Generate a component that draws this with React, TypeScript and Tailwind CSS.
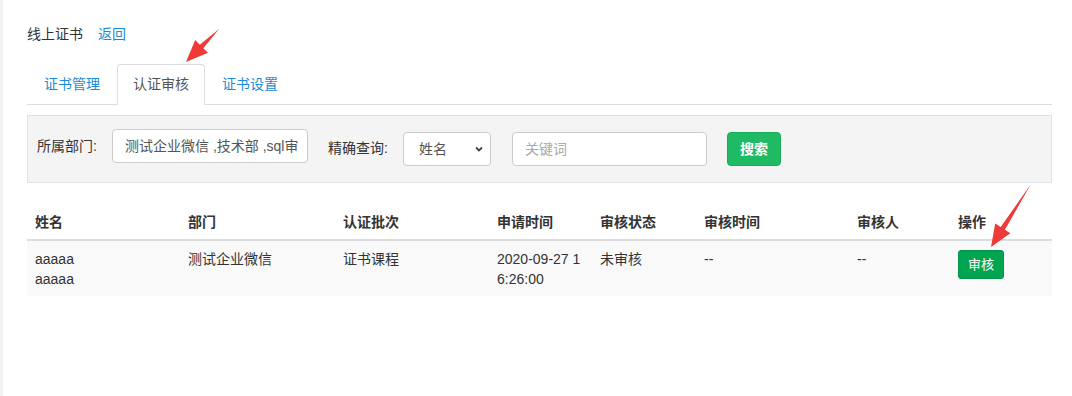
import React from "react";

const font = { fontFamily: '"Liberation Sans", "Noto Sans CJK SC", sans-serif' };

function Arrow({ x1, y1, x2, y2 }: { x1: number; y1: number; x2: number; y2: number }) {
  const dx = x2 - x1;
  const dy = y2 - y1;
  const len = Math.sqrt(dx * dx + dy * dy);
  const ux = dx / len;
  const uy = dy / len;
  const px = -uy;
  const py = ux;
  const head = 22;
  const hw = 9;
  const sw = 2.5;
  const bx = x2 - ux * head;
  const by = y2 - uy * head;
  const pts = [
    [x1, y1],
    [bx + px * sw, by + py * sw],
    [bx + px * hw, by + py * hw],
    [x2, y2],
    [bx - px * hw, by - py * hw],
    [bx - px * sw, by - py * sw],
  ]
    .map((p) => p.join(","))
    .join(" ");
  return <polygon points={pts} fill="#f03a3a" />;
}

export default function App() {
  const cols = [153, 155, 154, 103, 104, 153, 101, 102];
  const headers = ["姓名", "部门", "认证批次", "申请时间", "审核状态", "审核时间", "审核人", "操作"];
  return (
    <div className="relative w-[1072px] h-[396px] bg-white overflow-hidden text-[14px] text-[#333]" style={font}>
      <div className="absolute left-0 top-0 w-[3px] h-full bg-[#f2f2f2]" />
      <div className="pl-[27px] pr-[20px] pt-[24px]">
        <div className="flex items-center h-[20px] leading-[20px]">
          <span className="text-[#333]">线上证书</span>
          <span className="ml-[15px] text-[#1a8bd3]">返回</span>
        </div>
        <div className="mt-[20px] flex border-b border-[#ddd] h-[41px]">
          <div className="w-[90px] flex items-center justify-center text-[#1a8bd3]">证书管理</div>
          <div className="w-[88px] -mb-px flex items-center justify-center bg-white border border-[#ddd] border-b-white rounded-t-[4px] text-[#555]">认证审核</div>
          <div className="w-[90px] flex items-center justify-center text-[#1a8bd3]">证书设置</div>
        </div>
        <div className="mt-[10px] h-[68px] bg-[#f4f4f4] border border-[#e2e2e8] flex items-start pl-[9px]">
          <span className="w-[75px] mt-[20px] leading-[20px] text-[#333]">所属部门:</span>
          <div className="mt-[13px] w-[196px] h-[34px] bg-white border border-[#ccc] rounded-[4px] pl-[12px] flex items-center overflow-hidden whitespace-nowrap text-[#555]">
            测试企业微信 ,技术部 ,sql审
          </div>
          <span className="ml-[20px] w-[75px] mt-[22px] leading-[20px] text-[#333]">精确查询:</span>
          <div className="mt-[16px] w-[88px] h-[34px] bg-white border border-[#ccc] rounded-[4px] pl-[15px] pr-[6px] flex items-center justify-between text-[#555]">
            <span>姓名</span>
            <svg width="10" height="10" viewBox="0 0 10 10">
              <path d="M2 3.5 L5 6.5 L8 3.5" stroke="#444" strokeWidth="1.8" fill="none" />
            </svg>
          </div>
          <div className="mt-[16px] ml-[21px] w-[195px] h-[34px] bg-white border border-[#ccc] rounded-[4px] pl-[12px] flex items-center text-[#aaa]">
            关键词
          </div>
          <div className="mt-[16px] ml-[20px] w-[54px] h-[34px] rounded-[4px] bg-[#1fbb64] border border-[#17ad59] text-white font-bold flex items-center justify-center">
            搜索
          </div>
        </div>
        <div className="mt-[19px]">
          <div className="flex h-[39px] items-center font-bold text-[#333] border-b-2 border-[#ddd]">
            {headers.map((h, i) => (
              <div key={i} style={{ width: cols[i] }} className="px-[8px] pt-[3px]">
                {h}
              </div>
            ))}
          </div>
          <div className="flex bg-[#f9f9f9] h-[55px] pt-[8px] leading-[20px] text-[#333]">
            <div style={{ width: cols[0] }} className="px-[8px]">aaaaa<br />aaaaa</div>
            <div style={{ width: cols[1] }} className="px-[8px]">测试企业微信</div>
            <div style={{ width: cols[2] }} className="px-[8px]">证书课程</div>
            <div style={{ width: cols[3] }} className="px-[8px]">2020-09-27 1<br />6:26:00</div>
            <div style={{ width: cols[4] }} className="px-[8px]">未审核</div>
            <div style={{ width: cols[5] }} className="px-[8px]">--</div>
            <div style={{ width: cols[6] }} className="px-[8px]">--</div>
            <div style={{ width: cols[7] }} className="px-[8px]">
              <div className="mt-[1px] w-[46px] h-[29px] bg-[#00a552] border border-[#069248] rounded-[3px] text-white text-[13px] flex items-center justify-center">
                审核
              </div>
            </div>
          </div>
        </div>
      </div>
      <svg className="absolute left-0 top-0 pointer-events-none" width="1072" height="396">
        <Arrow x1={219} y1={29} x2={186} y2={62} />
        <Arrow x1={1031} y1={184} x2={991} y2={247} />
      </svg>
    </div>
  );
}
